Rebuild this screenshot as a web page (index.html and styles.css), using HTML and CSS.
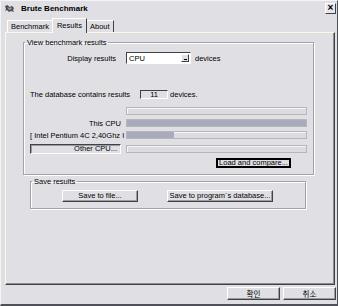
FILE: index.html
```html
<!DOCTYPE html>
<html lang="en">
    <head>
        <meta charset="UTF-8" />
        <title>Brute Benchmark</title>
        <link rel="stylesheet" href="styles.css">
    </head>
    <body>
        <div class="window">
            <div class="titlebar">
                <svg class="app-icon" width="11" height="9" viewBox="0 0 11 9">
                    <path d="M1 2 L4 1 L5 3 L8 2 L10 4 L9 6 L10 8 L7 7 L5 8 L3 6 L1 7 L2 5 Z" fill="#4a4a50" />
                    <path d="M3 3 L5 4 L7 3 L8 5 L5 6 Z" fill="#9a9aa0" />
                </svg>
                <span class="title">Brute Benchmark</span>
                <span class="close">×</span>
            </div>

            <div class="tabs">
                <span class="tab">Benchmark</span>
                <span class="tab active">Results</span>
                <span class="tab">About</span>
            </div>

            <div class="panel">
                <fieldset class="group view">
                    <legend>View benchmark results</legend>

                    <div class="display-row">
                        <span class="display-label">Display results</span>
                        <span class="select">
                            <span class="select-value">CPU</span>
                            <span class="select-arrow"></span>
                        </span>
                        <span>devices</span>
                    </div>

                    <div class="count-row">
                        <span>The database contains results</span>
                        <span class="count">11</span>
                        <span>devices.</span>
                    </div>

                    <div class="bars">
                        <span></span>
                        <div class="bar"></div>

                        <span class="bar-label">This CPU</span>
                        <div class="bar"><div class="fill" style="width: 100%"></div></div>

                        <span class="bar-label left">[ Intel Pentium 4C 2,40Ghz I</span>
                        <div class="bar"><div class="fill" style="width: 26%"></div></div>

                        <button class="btn pressed other">Other CPU...</button>
                        <div class="bar"></div>
                    </div>

                    <div class="load-row">
                        <button class="btn default">Load and compare...</button>
                    </div>
                </fieldset>

                <fieldset class="group save">
                    <legend>Save results</legend>
                    <div class="save-row">
                        <button class="btn save-file">Save to file...</button>
                        <button class="btn save-db">Save to program`s database...</button>
                    </div>
                </fieldset>
            </div>

            <div class="footer">
                <button class="btn dlg">확인</button>
                <button class="btn dlg">취소</button>
            </div>
        </div>
    </body>
</html>
```

FILE: styles.css
```css
body {
    margin: 0;
    font-family: "Liberation Sans", Arial, "Noto Sans CJK KR", sans-serif;
    font-size: 7.5px;
    color: #000;
    background: #e0dfe4;
}

.window {
    width: 338px;
    height: 306px;
    box-sizing: border-box;
    background: #e0dfe4;
    border-left: 1px solid #f4f4f6;
    border-top: 1px solid #f4f4f6;
    border-right: 1px solid #505058;
    border-bottom: 2px solid #505058;
    display: flex;
    flex-direction: column;
}

/* title bar */
.titlebar {
    height: 15px;
    display: flex;
    align-items: center;
    padding: 0 1px 0 3px;
}

.app-icon {
    margin-right: 6px;
}

.title {
    font-weight: bold;
    font-size: 8px;
    flex: 1;
}

.close {
    width: 9px;
    height: 9px;
    border: 1px solid;
    border-color: #fff #404048 #404048 #fff;
    background: #e8e8ec;
    font-size: 10px;
    font-weight: bold;
    line-height: 8px;
    text-align: center;
}

/* tabs */
.tabs {
    display: flex;
    align-items: flex-end;
    height: 15px;
    padding-left: 6px;
    margin-top: 1px;
}

.tab {
    height: 11px;
    line-height: 11px;
    padding: 0 3px;
    border: 1px solid;
    border-color: #fff #404048 transparent #fff;
    border-bottom: none;
    margin-right: -1px;
}

.tab.active {
    height: 14px;
    line-height: 13px;
    padding: 0 4px;
    position: relative;
    z-index: 1;
    background: #e0dfe4;
    margin-bottom: -1px;
}

/* tab page */
.panel {
    height: 251px;
    margin: 0 2px 0 4px;
    border: 1px solid;
    border-color: #fbf8ea #404048 #404048 #fbf8ea;
    box-shadow: inset -1px -1px 0 #8c8c94;
}

.group {
    margin: 0;
    padding: 0;
    border: 1px solid #a2a2aa;
    box-shadow: inset 1px 1px 0 #fff, 1px 1px 0 #fff;
}

.group legend {
    padding: 0 2px;
    margin-left: 1px;
    line-height: 9px;
}

.view {
    width: 291px;
    height: 137px;
    box-sizing: border-box;
    margin: 5px 0 0 17px;
    padding: 5px 5px 0 6px;
}

.view legend {
    margin-left: -5px;
}

.display-row {
    display: flex;
    align-items: center;
    height: 12px;
}

.display-label {
    width: 86px;
    text-align: right;
    margin-right: 10px;
}

.select {
    width: 63px;
    height: 10px;
    border: 1px solid;
    border-color: #404048 #fff #fff #404048;
    background: #fff;
    display: flex;
    align-items: center;
    margin-right: 4px;
}

.select-value {
    flex: 1;
    padding-left: 2px;
}

.select-arrow {
    width: 8px;
    height: 8px;
    margin-right: 1px;
    box-sizing: border-box;
    border: 1px solid;
    border-color: #fff #404048 #404048 #fff;
    background: #e0dfe4 linear-gradient(#000, #000) no-repeat 2px 4px / 3px 1px;
}

.count-row {
    display: flex;
    align-items: center;
    margin-top: 25px;
    height: 10px;
}

.count {
    width: 26px;
    height: 7px;
    line-height: 7px;
    margin: 0 2px 0 10px;
    text-align: center;
    border: 1px solid;
    border-color: #404048 #fff #fff #404048;
}

.bars {
    display: grid;
    grid-template-columns: 91px 181px;
    grid-auto-rows: 8px;
    column-gap: 5px;
    row-gap: 4px;
    align-items: center;
    margin-top: 8px;
}

.bars > :nth-child(7),
.bars > :nth-child(8) {
    margin-top: 3px;
}

.bar-label {
    text-align: right;
    white-space: nowrap;
}

.bar-label.left {
    text-align: left;
}

.bar {
    height: 8px;
    box-sizing: border-box;
    border: 1px solid #b6b6be;
    box-shadow: inset 1px 1px 0 #f6f6f8;
    background: #dcdbe0;
    display: flex;
}

.fill {
    background: #a9abbc;
}

.btn {
    font: inherit;
    color: #000;
    margin: 0;
    padding: 0;
    background: #e0dfe4;
    border: 1px solid;
    border-color: #fff #404048 #404048 #fff;
    box-shadow: inset -1px -1px 0 #9a9aa2;
    line-height: 8px;
}

.btn.pressed {
    border-color: #404048 #fff #fff #404048;
    box-shadow: inset 1px 1px 0 #9a9aa2;
}

.other {
    height: 10px;
    text-align: right;
    padding-right: 3px;
}

.load-row {
    display: flex;
    justify-content: flex-end;
    margin: 7px 17px 0 0;
}

.default {
    width: 75px;
    height: 10px;
    outline: 1px solid #000;
    outline-offset: -2px;
    border-color: #000;
    line-height: 6px;
}

.save {
    width: 276px;
    height: 32px;
    box-sizing: border-box;
    margin: 2px 0 0 24px;
}

.save-row {
    display: flex;
    margin-top: 4px;
    padding-left: 31px;
}

.save-row .btn {
    height: 12px;
}

.save-file {
    width: 76px;
    margin-right: 29px;
}

.save-db {
    width: 106px;
}

/* dialog buttons */
.footer {
    display: flex;
    justify-content: flex-end;
    gap: 3px;
    padding: 2px 1px 0 0;
}

.dlg {
    width: 53px;
    height: 13px;
    font-family: "Noto Sans CJK KR", sans-serif;
    font-size: 7.5px;
}
```
